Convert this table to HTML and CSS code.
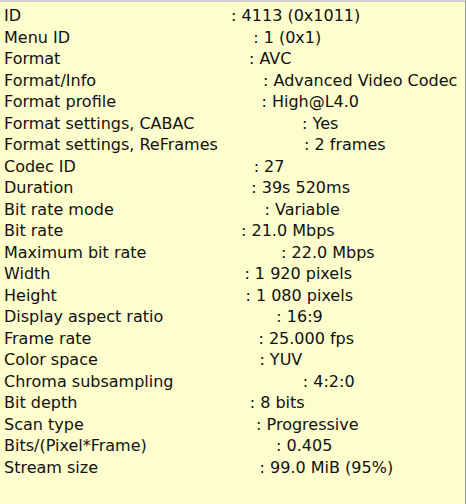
FILE: index.html
```html
<!DOCTYPE html>
<html>
<head>
<meta charset="utf-8">
<link rel="stylesheet" href="styles.css">
</head>
<body>
<div class="panel">
<div class="row"><span class="k">ID</span><span class="pad">                                       </span><span class="v">: 4113 (0x1011)</span></div>
<div class="row"><span class="k">Menu ID</span><span class="pad">                                  </span><span class="v">: 1 (0x1)</span></div>
<div class="row"><span class="k">Format</span><span class="pad">                                   </span><span class="v">: AVC</span></div>
<div class="row"><span class="k">Format/Info</span><span class="pad">                               </span><span class="v">: Advanced Video Codec</span></div>
<div class="row"><span class="k">Format profile</span><span class="pad">                           </span><span class="v">: High@L4.0</span></div>
<div class="row"><span class="k">Format settings, CABAC</span><span class="pad">                    </span><span class="v">: Yes</span></div>
<div class="row"><span class="k">Format settings, ReFrames</span><span class="pad">                </span><span class="v">: 2 frames</span></div>
<div class="row"><span class="k">Codec ID</span><span class="pad">                                 </span><span class="v">: 27</span></div>
<div class="row"><span class="k">Duration</span><span class="pad">                                 </span><span class="v">: 39s 520ms</span></div>
<div class="row"><span class="k">Bit rate mode</span><span class="pad">                            </span><span class="v">: Variable</span></div>
<div class="row"><span class="k">Bit rate</span><span class="pad">                                 </span><span class="v">: 21.0 Mbps</span></div>
<div class="row"><span class="k">Maximum bit rate</span><span class="pad">                         </span><span class="v">: 22.0 Mbps</span></div>
<div class="row"><span class="k">Width</span><span class="pad">                                    </span><span class="v">: 1 920 pixels</span></div>
<div class="row"><span class="k">Height</span><span class="pad">                                   </span><span class="v">: 1 080 pixels</span></div>
<div class="row"><span class="k">Display aspect ratio</span><span class="pad">                     </span><span class="v">: 16:9</span></div>
<div class="row"><span class="k">Frame rate</span><span class="pad">                               </span><span class="v">: 25.000 fps</span></div>
<div class="row"><span class="k">Color space</span><span class="pad">                              </span><span class="v">: YUV</span></div>
<div class="row"><span class="k">Chroma subsampling</span><span class="pad">                        </span><span class="v">: 4:2:0</span></div>
<div class="row"><span class="k">Bit depth</span><span class="pad">                                </span><span class="v">: 8 bits</span></div>
<div class="row"><span class="k">Scan type</span><span class="pad">                                </span><span class="v">: Progressive</span></div>
<div class="row"><span class="k">Bits/(Pixel*Frame)</span><span class="pad">                        </span><span class="v">: 0.405</span></div>
<div class="row"><span class="k">Stream size</span><span class="pad">                              </span><span class="v">: 99.0 MiB (95%)</span></div>
</div>
</body>
</html>
```
FILE: styles.css
```css
html, body {
  margin: 0;
  padding: 0;
  background: #fefdcd;
}
.panel {
  box-sizing: border-box;
  width: 466px;
  height: 504px;
  background: #fefdcd;
  border-top: 2px solid #cfcfcf;
  border-right: 1px solid #9a9a9a;
  padding: 3px 0 0 4px;
  font-family: "DejaVu Sans", sans-serif;
  font-size: 16px;
  line-height: 21.5px;
  color: #111111;
}
.row {
  white-space: pre;
}
.pad {
  word-spacing: 0.3px;
}
```
